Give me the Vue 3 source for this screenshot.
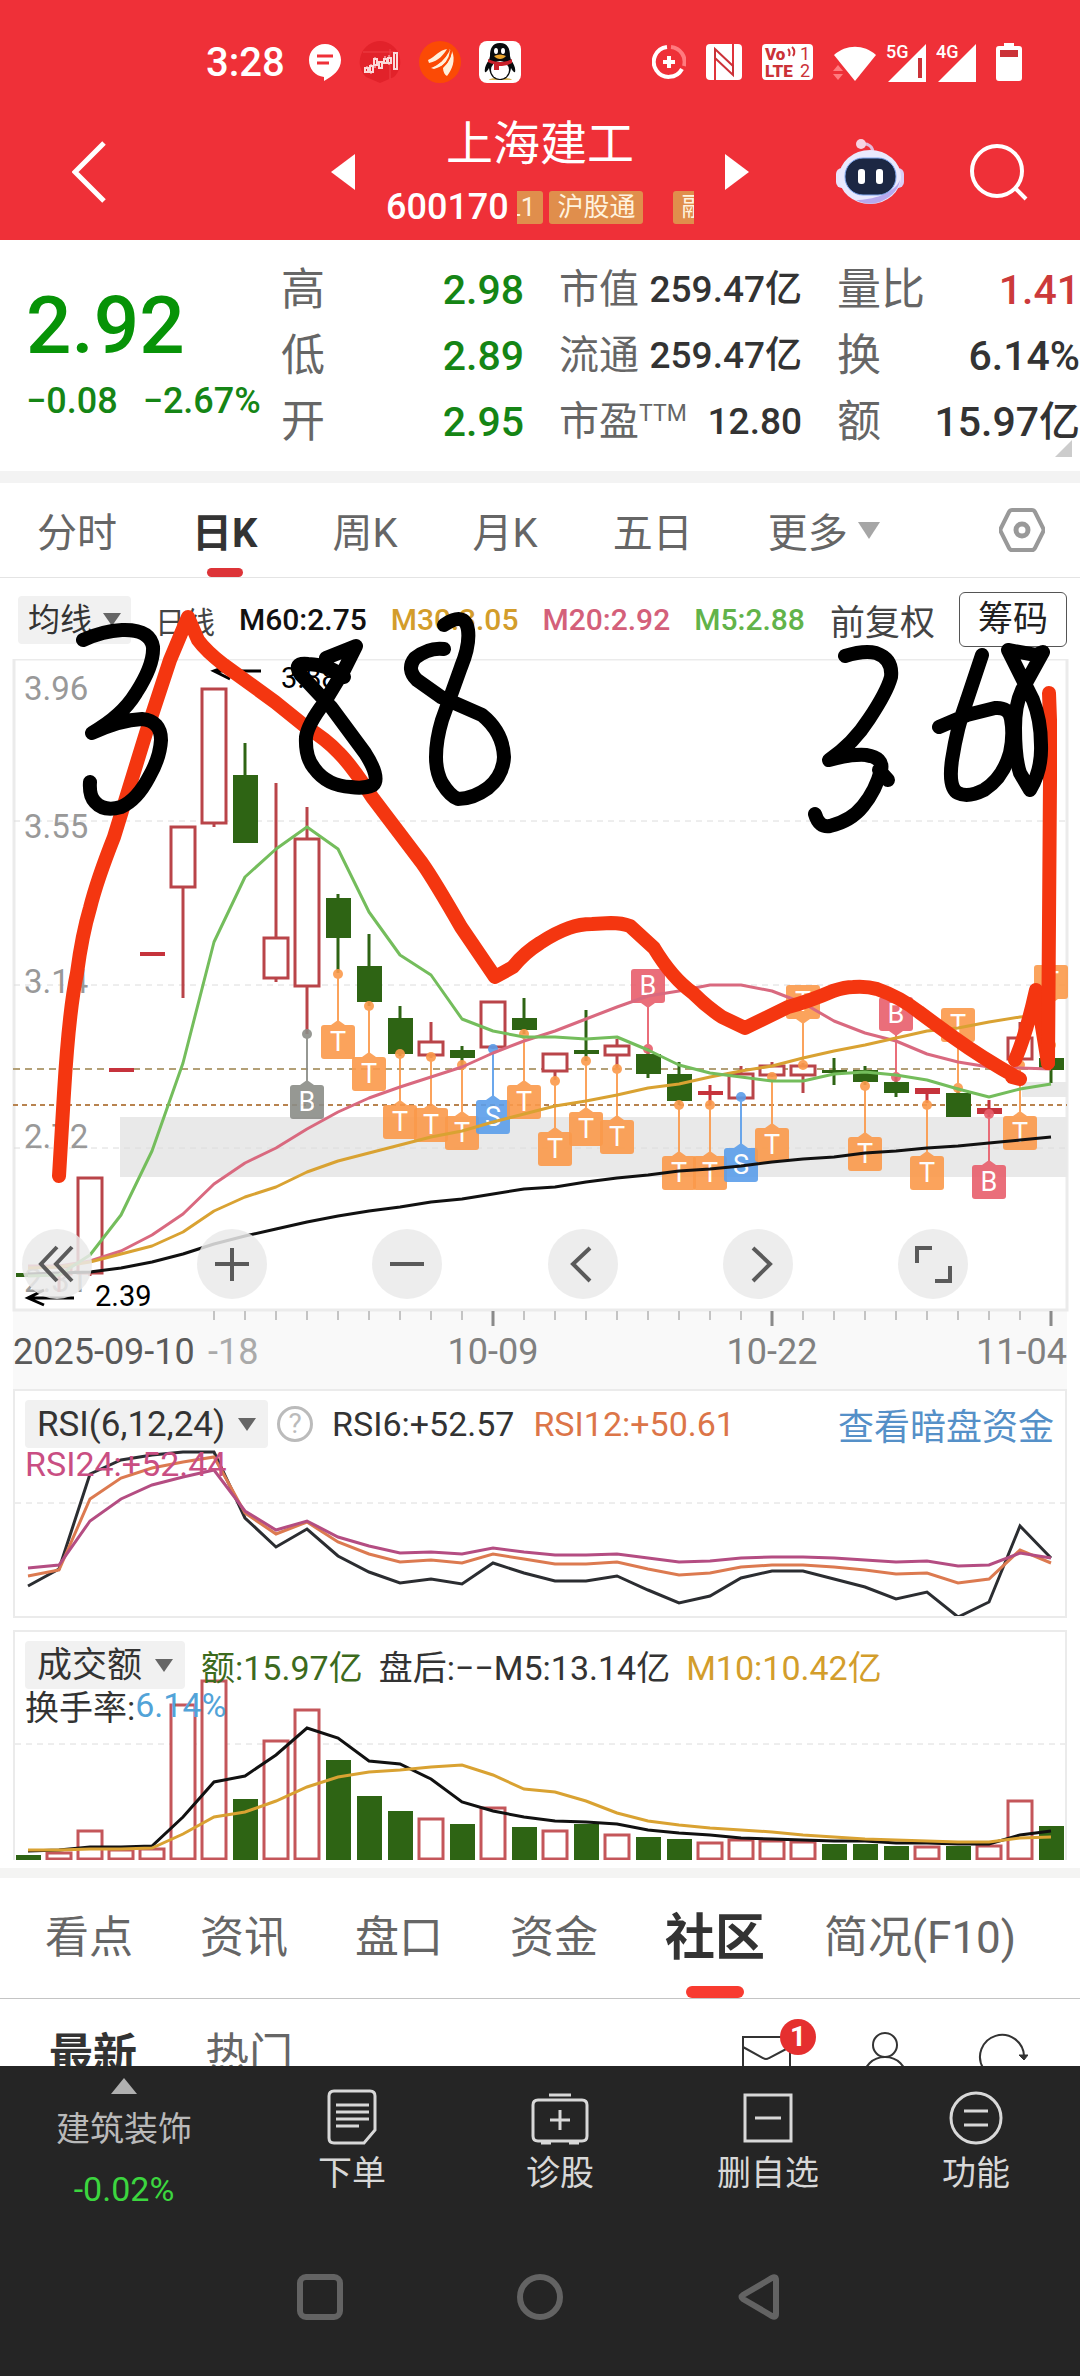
<template>
	<div class="app">
		<header class="header">
			<div class="status-bar">
				<div class="status-left">
					<span class="clock">3:28</span>
					<svg width="32" height="38" viewBox="0 0 32 38">
						<path d="M16 1C7 1 0 8 0 17s6 16 15 17v4c9-5 17-11 17-21C32 8 25 1 16 1z" fill="#fff" />
						<path d="M8 13h16M8 20h12" stroke="#ef3038" stroke-width="3" />
					</svg>
					<svg width="42" height="42" viewBox="0 0 42 42">
						<path d="M21 0a21 21 0 0 1 14 36l-14 6-14-6A21 21 0 0 1 21 0z" fill="#e2222a" />
						<path d="M4 11h32M31 8v30" stroke="#ee4046" />
						<path
							d="M8 25v6M12 23v10M16 16v11M21 20v8M26 15v8M30 14v10"
							stroke="#fbd9d9"
						/>
						<path
							d="M6 27h3v4H6zM11 25h3v6h-3zM15 18h3v6h-3zM20 21h3v6h-3zM25 18h3v4h-3zM29 17h3v5h-3zM35 12h3v16h-3z"
							fill="#e2222a"
							stroke="#fbd9d9"
							stroke-width="2"
						/>
					</svg>
					<svg width="42" height="42" viewBox="0 0 42 42">
						<circle cx="21" cy="21" r="21" fill="#fb4a05" />
						<path
							d="M9 19C16 16 20 9 28 8c-3 5-8 12-18 14zM12 27c8-3 14-9 19-19 2 8-4 17-16 20zM24 27c5-5 8-10 9-17 4 9 0 19-5 25-2-1-4-4-4-8z"
							fill="#fff0dc"
						/>
						<path d="M30 9c-5 9-10 14-20 17M32 10c-1 8-6 15-14 19" fill="none" stroke="#fb4a05" stroke-width="2" />
					</svg>
					<svg width="42" height="42" viewBox="0 0 42 42">
						<rect width="42" height="42" rx="8" fill="#fff" />
						<path d="M10 39c0-3 22-3 23 0z" fill="#d9b65a" />
						<path
							d="M21 2c-8 0-10 6-10 13l-1 4c-3 4-5 9-4 12 1 1 3-2 4-4 1 8 5 12 11 12s10-4 11-12c1 2 3 5 4 4 1-3-1-8-4-12l-1-4C31 8 29 2 21 2z"
							fill="#080b0d"
						/>
						<ellipse cx="21" cy="29" rx="9" ry="9" fill="#fff" />
						<ellipse cx="17" cy="10" rx="2" ry="3" fill="#fff" />
						<ellipse cx="24" cy="10" rx="2" ry="3" fill="#fff" />
						<path d="M15 15c4-2 8-2 12 0-3 4-9 4-12 0z" fill="#eba52d" />
						<path d="M9 18c8 4 16 4 24 0v4c-4 2-8 3-13 3v4h-5v-6c-2 0-4-1-6-2z" fill="#c9202a" />
					</svg>
				</div>
				<div class="status-right">
					<svg width="34" height="34" viewBox="0 0 34 34" fill="none" stroke-width="4">
						<path d="M15 2a15 15 0 1 0 15 22" stroke="#fff" />
						<path d="M19 2a15 15 0 0 1 13 19" stroke="#ff7b7f" />
						<path d="M17 11v12M11 17h12" stroke="#fff" />
					</svg>
					<svg width="36" height="36" viewBox="0 0 36 36">
						<rect width="36" height="36" rx="4" fill="#fff" />
						<path d="M9 36V5M27 31V0" fill="none" stroke="#e0343b" stroke-width="2" />
						<path d="M9 5l18 17v9L9 14z" fill="#fff" stroke="#cb3238" stroke-width="2" />
					</svg>
					<svg width="51" height="36" viewBox="0 0 51 36" class="volte">
						<rect width="51" height="36" rx="4" fill="#fff" />
						<text x="3" y="16" class="volte-bold">Vo</text>
						<text x="3" y="33" class="volte-bold">LTE</text>
						<text x="38" y="16">1</text>
						<text x="38" y="33">2</text>
						<path d="M26 5c2 2 2 4 1 7M30 3c3 3 3 6 1 9" fill="none" stroke="#cb3238" stroke-width="2" />
					</svg>
					<div class="signals">
						<svg width="43" height="36" viewBox="0 0 43 36">
							<path d="M1 9C13-2 31-2 43 9L22 35z" fill="#fff" />
							<path d="M0 25l5-6 5 6zM0 28l5 6 5-6z" fill="#ff7b7f" />
						</svg>
						<svg width="40" height="44" viewBox="0 -6 40 44" class="cell">
							<path d="M40 0v38H2z" fill="#fff" />
							<path d="M32 14h4v20h-4z" fill="#cb3238" />
							<text x="0" y="14">5G</text>
						</svg>
						<svg width="40" height="44" viewBox="0 -6 40 44" class="cell">
							<path d="M40 0v38H2z" fill="#fff" />
							<text x="0" y="14">4G</text>
						</svg>
					</div>
					<svg width="26" height="38" viewBox="0 0 26 38">
						<path
							d="M8 0h10v3h5a3 3 0 0 1 3 3v29a3 3 0 0 1-3 3H3a3 3 0 0 1-3-3V6a3 3 0 0 1 3-3h5z"
							fill="#fff"
						/>
						<path d="M4 7h18v7H4z" fill="#cb3238" />
					</svg>
				</div>
			</div>
			<div class="title-bar">
				<button class="icon-button" aria-label="返回">
					<svg width="34" height="62" viewBox="0 0 34 62">
						<path d="M32 2L3 31l29 29" fill="none" stroke="#fff" stroke-width="5" />
					</svg>
				</button>
				<div class="stock-switch">
					<button class="icon-button" aria-label="上一只">
						<svg width="24" height="36" viewBox="0 0 24 36"><path d="M24 0v36L0 18z" fill="#fff" /></svg>
					</button>
					<div class="stock-title">
						<h1>上海建工</h1>
						<div class="stock-code">
							<span>600170</span>
							<div class="tags">
								<span class="tag">L1</span>
								<span class="tag">沪股通</span>
								<span class="tag tag-last">融</span>
							</div>
						</div>
					</div>
					<button class="icon-button" aria-label="下一只">
						<svg width="24" height="36" viewBox="0 0 24 36"><path d="M0 0v36l24-18z" fill="#fff" /></svg>
					</button>
				</div>
				<div class="title-actions">
					<button class="icon-button" aria-label="智能助手">
						<svg width="68" height="66" viewBox="0 0 68 66">
							<path d="M25 5c8-1 12 3 12 9" fill="none" stroke="#e3b9d9" stroke-width="3" />
							<circle cx="25" cy="5" r="5" fill="#f6d3e2" />
							<rect y="29" width="12" height="20" rx="6" fill="#e9e4fb" />
							<rect x="56" y="29" width="12" height="20" rx="6" fill="#d9cdf5" />
							<ellipse cx="34" cy="38" rx="31" ry="27" fill="#e9e9fd" />
							<path d="M20 61c9 5 19 5 28 0 9-4 15-12 16-20-6 14-28 20-44 20z" fill="#b7a8ee" />
							<rect x="9" y="19" width="51" height="37" rx="18" fill="#1c2743" stroke="#7fa7ef" />
							<rect x="22" y="30" width="7" height="15" rx="3" fill="#fff" />
							<rect x="40" y="30" width="7" height="15" rx="3" fill="#fff" />
						</svg>
					</button>
					<button class="icon-button" aria-label="搜索">
						<svg width="58" height="58" viewBox="0 0 58 58" fill="none" stroke="#fff" stroke-width="4">
							<circle cx="27" cy="28" r="25" />
							<path d="M45 45l11 11" />
						</svg>
					</button>
				</div>
			</div>
		</header>

		<section class="quote">
			<div class="price">
				<strong>2.92</strong>
				<div class="change"><span>−0.08</span><span>−2.67%</span></div>
			</div>
			<div class="facts">
				<dl v-for="(group, index) in facts" :key="index" :class="{ compact: index === 1 }">
					<div v-for="fact in group" :key="fact.label" class="fact">
						<dt>{{ fact.label }}<sup v-if="fact.sup">{{ fact.sup }}</sup></dt>
						<dd :class="fact.tone">{{ fact.value }}</dd>
					</div>
				</dl>
			</div>
			<i class="corner"></i>
		</section>

		<nav class="periods">
			<button v-for="period in periods" :key="period" :class="{ active: period === '日K' }">
				{{ period }}
			</button>
			<button class="more">更多<i class="caret"></i></button>
			<button class="settings" aria-label="设置">
				<svg width="46" height="44" viewBox="0 0 46 44" fill="none" stroke="#999">
					<path d="M13 2h20q2 0 3 2l8 16q1 2 0 4l-8 16q-1 2-3 2H13q-2 0-3-2L2 24q-1-2 0-4l8-16q1-2 3-2z" stroke-width="4" />
					<circle cx="23" cy="22" r="6" stroke-width="5" />
				</svg>
			</button>
		</nav>

		<section class="chart">
			<div class="legend">
				<label class="picker">
					<select aria-label="指标"><option>均线</option></select>
					<i class="caret"></i>
				</label>
				<span class="legend-period">日线</span>
				<span>M60:2.75</span>
				<span class="gold">M30:3.05</span>
				<span class="pink">M20:2.92</span>
				<span class="lime">M5:2.88</span>
				<button class="adjust">前复权</button>
				<button class="chips">筹码</button>
			</div>

			<svg class="plot" viewBox="0 659 1080 730">
				<rect x="13" y="1311" width="1054" height="78" fill="#f9f9f9" />
				<rect x="14" y="659" width="1053" height="651" fill="#fff" stroke="#ebebeb" stroke-width="3" />
				<rect x="120" y="1117" width="947" height="60" fill="#e9e9e9" />
				<rect x="1022" y="1082" width="45" height="15" fill="#e9e9e9" />
				<path d="M14 821H1067M14 985H1067M14 1148H1067" stroke="#dcdcdc" stroke-dasharray="6 5" />
				<path d="M13 1069H1067" stroke="#b3a077" stroke-width="2" stroke-dasharray="7 5" />
				<path d="M13 1105H1067" stroke="#b8834f" stroke-width="2" stroke-dasharray="5 4" />

				<g class="price-labels">
					<text x="24" y="700">3.96</text>
					<text x="24" y="838">3.55</text>
					<text x="24" y="993">3.14</text>
					<text x="24" y="1148">2.72</text>
					<text x="24" y="1292">2.31</text>
				</g>

				<g v-for="(c, i) in candles" :key="'c' + i" :class="c[0]">
					<path :d="`M${x(i)} ${c[1]}V${c[2]}M${x(i)} ${c[3]}V${c[4]}`" stroke-width="3" />
					<rect
						v-if="c[0] === 'up'"
						:x="x(i) - 12"
						:y="c[2] + 1"
						width="24"
						:height="c[3] - c[2] - 1"
						stroke-width="3"
					/>
					<rect v-else :x="x(i) - 12" :y="c[2]" width="25" :height="c[3] - c[2]" stroke="none" />
				</g>

				<g v-for="m in markers" :key="'m' + m[0]" :fill="markerColors[m[1]]" opacity="0.9">
					<circle :cx="x(m[0])" :cy="m[2]" r="5" />
					<path :d="stem(m)" :stroke="markerColors[m[1]]" stroke-width="2" />
					<path :d="pointer(m)" />
					<rect :x="x(m[0]) - 17" :y="boxTop(m)" width="34" height="34" rx="3" />
					<text :x="x(m[0])" :y="boxTop(m) + 26" class="marker-text">{{ m[1][0] }}</text>
				</g>

				<g fill="none" stroke-width="3" stroke-linejoin="round">
					<polyline :points="line(ma20)" stroke="#d9697f" />
					<polyline :points="line(ma30)" stroke="#d9a232" />
					<polyline :points="line(ma60)" stroke="#111" />
					<polyline :points="line(ma5)" stroke="#74bd5c" />
				</g>

				<g fill="none" stroke="#000" stroke-width="3">
					<path d="M261 671H214M230 679l-16-8 16-6" />
					<path d="M74 1298H28M44 1290l-16 8 16 7" />
				</g>
				<text x="281" y="688" class="extreme">3.88</text>
				<text x="95" y="1306" class="extreme">2.39</text>

				<path :d="ticks" stroke="#c4c4c4" stroke-width="2" />
				<path d="M493 1311v15M772 1311v15M1051 1311v15" stroke="#8a8a8a" stroke-width="3" />
				<g class="dates">
					<text x="208" y="1364" fill="#aaa">-18</text>
					<text x="13" y="1364" fill="#5a5a5a">2025-09-10</text>
					<text x="493" y="1364" text-anchor="middle">10-09</text>
					<text x="772" y="1364" text-anchor="middle">10-22</text>
					<text x="1067" y="1364" text-anchor="end">11-04</text>
				</g>
			</svg>

			<div class="controls">
				<button v-for="control in controls" :key="control.label" :aria-label="control.label">
					<svg width="70" height="70" viewBox="0 0 70 70">
						<path :d="control.path" fill="none" stroke="#5a5a5a" stroke-width="4" />
					</svg>
				</button>
			</div>

			<svg class="drawing" viewBox="0 578 1080 811">
				<g stroke="#f43610">
					<path
						d="M59 1176L64 1093Q69 1010 77 973Q82 935 90 908Q97 880 114 837L146 733L170 660L188 617L198 640Q206 651 224 665L275 702L306 727Q326 739 339 753Q352 766 372 797L422 863Q434 880 461 927L495 977L513 967Q524 953 540 943Q555 933 569 928Q580 924 592 924L611 923Q622 923 630 926L654 948Q672 978 693 993Q707 1007 722 1017L745 1028L788 1007Q810 1001 833 991Q845 987 853 987Q867 986 877 989Q900 997 919 1012L953 1037Q985 1060 1020 1079L1012 1077"
					/>
					<path d="M1015 1060Q1026 1035 1036 990L1048 1063" />
					<path d="M1049 693L1050 720V780L1048 1063" />
				</g>
				<g stroke="#000">
					<path
						d="M83 640Q103 631 122 630Q150 629 153 647Q154 665 136 693Q122 716 92 733Q120 720 142 719Q161 721 161 740Q160 758 149 777Q137 800 121 807Q104 812 95 802Q89 796 90 782"
					/>
					<path
						d="M344 677Q330 665 308 664Q292 662 301 675L331 707L365 753Q381 778 373 785Q364 789 351 787Q327 786 314 768Q305 757 306 737Q308 724 324 703L344 670L356 646L326 658"
					/>
					<path
						d="M444 649Q429 647 415 658Q406 669 417 680L441 697L482 715Q503 732 504 757Q503 776 488 788Q473 799 458 799Q450 796 442 783Q436 772 436 757Q436 740 442 720L461 667Q470 645 468 630Q465 611 444 625"
					/>
					<path
						d="M845 656Q864 650 876 653Q893 659 891 677Q887 692 869 719Q853 744 829 760Q850 754 866 755Q884 758 881 770Q876 790 863 806Q851 821 830 826Q819 828 815 814M879 770L888 780"
					/>
					<path
						d="M982 655L967 700Q957 727 952 760Q948 788 958 793Q968 798 984 790Q1003 778 1010 753Q1014 735 1011 719Q1009 707 995 708L967 715L939 727"
					/>
					<path
						d="M1008 650L1036 655L1043 652L1022 690Q1015 705 1015 728Q1015 758 1020 773L1030 790Q1042 770 1041 745Q1041 720 1033 700Z"
					/>
				</g>
			</svg>
		</section>

		<section class="panel">
			<svg class="plot" viewBox="15 1391 1050 225">
				<path d="M15 1503H1065" stroke="#dcdcdc" stroke-dasharray="6 5" />
				<g fill="none" stroke-width="3">
					<polyline :points="line(rsi6)" stroke="#2b2d31" />
					<polyline :points="line(rsi12)" stroke="#dc7a50" />
					<polyline :points="line(rsi24)" stroke="#b44d82" />
				</g>
			</svg>
			<div class="panel-text">
				<div class="panel-row">
					<label class="picker">
						<select aria-label="RSI 参数"><option>RSI(6,12,24)</option></select>
						<i class="caret"></i>
					</label>
					<button class="help" aria-label="说明">?</button>
					<span>RSI6:+52.57</span>
					<span class="orange">RSI12:+50.61</span>
					<a href="#">查看暗盘资金</a>
				</div>
				<div class="panel-row second magenta">RSI24:+52.44</div>
			</div>
		</section>

		<section class="panel">
			<svg class="plot" viewBox="15 1632 1050 228">
				<path d="M15 1744H1065" stroke="#dcdcdc" stroke-dasharray="6 5" />
				<template v-for="(top, i) in volumes" :key="i">
					<rect
						v-if="isUp(i)"
						:x="x(i) - 12"
						:y="top + 1"
						width="24"
						:height="1858 - top"
						fill="#fff"
						stroke="#c4565a"
						stroke-width="3"
					/>
					<rect v-else :x="x(i) - 12" :y="top" width="25" :height="1860 - top" fill="#2e6414" />
				</template>
				<g fill="none" stroke-width="3">
					<polyline :points="line(volume5)" stroke="#111" />
					<polyline :points="line(volume10)" stroke="#d9a232" />
				</g>
			</svg>
			<div class="panel-text">
				<div class="panel-row volume-row">
					<label class="picker">
						<select aria-label="副图指标"><option>成交额</option></select>
						<i class="caret"></i>
					</label>
					<span class="dark-green">额:15.97亿</span>
					<span>盘后:−−M5:13.14亿</span>
					<span class="gold">M10:10.42亿</span>
				</div>
				<div class="panel-row second">换手率:<span class="sky">6.14%</span></div>
			</div>
		</section>

		<nav class="sections">
			<a
				v-for="section in sections"
				:key="section"
				href="#"
				:class="{ active: section === '社区' }"
				>{{ section }}</a
			>
		</nav>

		<div class="feed-bar">
			<button class="active">最新</button>
			<button>热门</button>
			<div class="feed-actions">
				<button class="mail" aria-label="消息">
					<svg width="50" height="50" viewBox="0 0 50 50" fill="none" stroke="#333" stroke-width="2">
						<path d="M1 7h47v36H1zM1 17l20 11q3 2 6 0l21-11" />
					</svg>
					<span class="badge">1</span>
				</button>
				<button aria-label="我的">
					<svg width="50" height="50" viewBox="0 0 50 50" fill="none" stroke="#333" stroke-width="2">
						<circle cx="25" cy="15" r="12" />
						<path d="M3 50c0-14 10-23 22-23s22 9 22 23" />
					</svg>
				</button>
				<button aria-label="刷新">
					<svg width="50" height="50" viewBox="0 0 50 50">
						<path d="M46 26A22 22 0 1 0 40 42" fill="none" stroke="#333" stroke-width="2" />
						<path d="M41 25h9l-4 5z" fill="#333" stroke="#333" />
					</svg>
				</button>
			</div>
		</div>

		<footer class="footer">
			<div class="toolbar">
				<a href="#" class="sector">
					<i class="up-arrow"></i>
					<span>建筑装饰</span>
					<span class="sector-change">-0.02%</span>
				</a>
				<button v-for="tool in tools" :key="tool.label">
					<svg width="58" height="58" viewBox="0 0 58 58" fill="none" stroke="#d8d8d8">
						<path v-for="d in tool.paths" :key="d" :d="d" stroke-width="3" />
					</svg>
					<span>{{ tool.label }}</span>
				</button>
			</div>
			<div class="system-nav">
				<button aria-label="最近任务">
					<svg width="46" height="46" viewBox="0 0 46 46">
						<rect x="3" y="3" width="40" height="40" rx="6" />
					</svg>
				</button>
				<button aria-label="主屏幕">
					<svg width="46" height="46" viewBox="0 0 46 46"><circle cx="23" cy="23" r="20" /></svg>
				</button>
				<button aria-label="后退">
					<svg width="46" height="46" viewBox="0 0 46 46">
						<path d="M39 6v34q0 4-4 2L6 25q-3-2 0-4L35 4q4-2 4 2z" />
					</svg>
				</button>
			</div>
		</footer>
	</div>
</template>

<script setup>
const facts = [
	[
		{ label: "高", value: "2.98", tone: "fall" },
		{ label: "低", value: "2.89", tone: "fall" },
		{ label: "开", value: "2.95", tone: "fall" },
	],
	[
		{ label: "市值", value: "259.47亿" },
		{ label: "流通", value: "259.47亿" },
		{ label: "市盈", sup: "TTM", value: "12.80" },
	],
	[
		{ label: "量比", value: "1.41", tone: "rise" },
		{ label: "换", value: "6.14%" },
		{ label: "额", value: "15.97亿" },
	],
];

const periods = ["分时", "日K", "周K", "月K", "五日"];
const sections = ["看点", "资讯", "盘口", "资金", "社区", "简况(F10)"];

// one column per trading day
const x = (i) => 28 + 31 * i;
const line = (values) => values.map((y, i) => `${x(i)},${y}`).join(" ");

// [kind, high, body top, body bottom, low]
const candles = [
	["down", 1273, 1273, 1277, 1277],
	["up", 1264, 1266, 1274, 1292],
	["up", 1177, 1177, 1273, 1276],
	["solid", 1068, 1068, 1072, 1072],
	["solid", 952, 952, 956, 956],
	["up", 826, 826, 887, 998],
	["up", 688, 688, 823, 827],
	["down", 743, 775, 843, 843],
	["up", 783, 937, 978, 982],
	["up", 807, 838, 986, 1034],
	["down", 894, 898, 938, 973],
	["down", 934, 966, 1002, 1006],
	["down", 1006, 1018, 1054, 1056],
	["up", 1022, 1041, 1055, 1058],
	["down", 1046, 1050, 1058, 1066],
	["up", 1001, 1001, 1047, 1049],
	["down", 998, 1018, 1030, 1034],
	["up", 1053, 1053, 1071, 1080],
	["down", 1010, 1050, 1054, 1061],
	["up", 1039, 1045, 1055, 1068],
	["down", 1048, 1054, 1074, 1078],
	["down", 1062, 1074, 1101, 1105],
	["solid", 1085, 1091, 1095, 1105],
	["up", 1066, 1073, 1098, 1098],
	["up", 1062, 1065, 1075, 1077],
	["up", 1063, 1065, 1075, 1093],
	["down", 1058, 1070, 1073, 1085],
	["down", 1066, 1070, 1082, 1085],
	["down", 1077, 1082, 1093, 1097],
	["solid", 1088, 1088, 1094, 1103],
	["down", 1087, 1093, 1117, 1117],
	["solid", 1100, 1108, 1114, 1117],
	["up", 1022, 1037, 1059, 1063],
	["down", 1058, 1058, 1070, 1083],
];

const markerColors = { T: "#fb9a4b", B: "#e85f6c", S: "#5b9eeb", B0: "#8b8d88" };

// [day, kind, anchor y, flag drawn above the candle]
const markers = [
	[9, "B0", 1034],
	[10, "T", 974],
	[11, "T", 1006],
	[12, "T", 1054],
	[13, "T", 1057],
	[14, "T", 1065],
	[15, "S", 1049],
	[16, "T", 1034],
	[17, "T", 1081],
	[18, "T", 1061],
	[19, "T", 1069],
	[20, "B", 1049, true],
	[21, "T", 1105],
	[22, "T", 1105],
	[23, "S", 1097],
	[24, "T", 1077],
	[25, "T", 1065, true],
	[27, "T", 1086],
	[28, "B", 1077, true],
	[29, "T", 1105],
	[30, "T", 1088, true],
	[31, "B", 1114],
	[32, "T", 1065],
	[33, "T", 1045, true],
];

const boxTop = ([, , y, above]) => (above ? y - 80 : y + 51);
const stem = ([i, , y, above]) => `M${x(i)} ${y}V${above ? y - 46 : y + 51}`;
const pointer = ([i, , y, above]) =>
	above
		? `M${x(i) - 7} ${y - 46}l7 5 7-5z`
		: `M${x(i) - 7} ${y + 51}l7-5 7 5z`;

const ticks = candles.map((c, i) => (i > 5 ? `M${x(i)} 1311v9` : "")).join("");

const ma5 = [
	1276, 1275, 1255, 1215, 1151, 1063, 942, 877, 849, 827, 849, 912, 955, 975, 1019, 1031, 1037,
	1037, 1039, 1037, 1050, 1065, 1073, 1077, 1081, 1081, 1074, 1072, 1075, 1080, 1089, 1097, 1089,
	1084,
];
const ma20 = [
	1266, 1266, 1261, 1251, 1235, 1214, 1184, 1163, 1148, 1129, 1112, 1098, 1087, 1077, 1067, 1053,
	1041, 1031, 1019, 1007, 996, 991, 985, 985, 991, 1003, 1021, 1033, 1041, 1054, 1062, 1067, 1068,
	1069,
];
const ma30 = [
	1268, 1267, 1262, 1254, 1246, 1232, 1211, 1197, 1187, 1172, 1161, 1153, 1145, 1137, 1131, 1122,
	1114, 1106, 1101, 1095, 1088, 1084, 1077, 1071, 1066, 1058, 1051, 1045, 1038, 1031, 1028, 1022,
	1017, 1015,
];
const ma60 = [
	1274, 1273, 1272, 1268, 1262, 1254, 1244, 1236, 1229, 1222, 1216, 1211, 1207, 1202, 1199, 1194,
	1189, 1187, 1182, 1178, 1175, 1171, 1169, 1166, 1162, 1159, 1157, 1153, 1151, 1148, 1146, 1143,
	1140, 1137,
];

const rsi6 = [
	1586, 1569, 1474, 1460, 1455, 1452, 1452, 1518, 1547, 1529, 1556, 1572, 1583, 1579, 1584, 1563,
	1573, 1581, 1581, 1576, 1590, 1603, 1596, 1578, 1571, 1571, 1579, 1587, 1599, 1592, 1617, 1602,
	1526, 1558,
];
const rsi12 = [
	1576, 1570, 1499, 1478, 1468, 1462, 1457, 1513, 1534, 1522, 1542, 1554, 1562, 1560, 1563, 1554,
	1559, 1564, 1564, 1562, 1569, 1575, 1573, 1567, 1565, 1565, 1567, 1570, 1574, 1573, 1583, 1579,
	1550, 1563,
];
const rsi24 = [
	1568, 1565, 1521, 1499, 1485, 1477, 1470, 1511, 1530, 1521, 1537, 1546, 1553, 1552, 1554, 1548,
	1552, 1555, 1555, 1554, 1558, 1562, 1561, 1558, 1557, 1557, 1558, 1560, 1562, 1561, 1566, 1565,
	1553, 1558,
];

const volumes = [
	1855, 1852, 1830, 1849, 1848, 1704, 1680, 1799, 1740, 1709, 1760, 1796, 1811, 1818, 1824, 1807,
	1827, 1830, 1824, 1834, 1837, 1839, 1842, 1839, 1840, 1841, 1844, 1844, 1846, 1846, 1846, 1845,
	1800, 1826,
];
const volume5 = [
	1851, 1850, 1847, 1847, 1846, 1817, 1782, 1776, 1755, 1728, 1738, 1761, 1764, 1779, 1802, 1811,
	1817, 1821, 1822, 1824, 1830, 1833, 1835, 1838, 1839, 1840, 1841, 1841, 1843, 1843, 1844, 1844,
	1835, 1831,
];
const volume10 = [
	1850, 1850, 1849, 1849, 1848, 1834, 1817, 1812, 1801, 1787, 1777, 1772, 1770, 1767, 1765, 1775,
	1789, 1792, 1801, 1813, 1821, 1825, 1828, 1830, 1832, 1835, 1837, 1839, 1840, 1841, 1842, 1842,
	1838, 1837,
];
const isUp = (i) => candles[i][0] !== "down";

const controls = [
	{ label: "最早", path: "M35 18L19 35l16 17M50 18L34 35l16 17" },
	{ label: "放大", path: "M35 19v33M18 35h34" },
	{ label: "缩小", path: "M18 35h34" },
	{ label: "向左", path: "M42 19L25 35l17 17" },
	{ label: "向右", path: "M30 19l17 16-17 17" },
	{ label: "全屏", path: "M19 34V19h15M52 37v15H37" },
];

const tools = [
	{
		label: "下单",
		paths: [
			"M11 3h36q5 0 5 5v34L41 55H11q-5 0-5-5V8q0-5 5-5z",
			"M13 17h33M13 24h33M13 31h33M13 38h23",
		],
	},
	{
		label: "诊股",
		paths: [
			"M7 12h44q5 0 5 5v31q0 5-5 5H7q-5 0-5-5V17q0-5 5-5z",
			"M18 7h22M29 22v20M19 32h20M10 55h10M38 55h10",
		],
	},
	{ label: "删自选", paths: ["M6 7h46v46H6z", "M16 30h26"] },
	{
		label: "功能",
		paths: ["M29 5a25 25 0 1 1 0 50a25 25 0 1 1 0-50z", "M17 23h24M17 37h24"],
	},
];
</script>

<style>
body {
	margin: 0;
	background: #fff;
}
</style>

<style scoped>
.app {
	min-height: 100vh;
	background: #fff;
	color: #333;
	font-family: Roboto, "Noto Sans CJK SC", sans-serif;
	overflow-x: hidden;
}

button,
select {
	margin: 0;
	padding: 0;
	border: none;
	background: none;
	color: inherit;
	font: inherit;
	white-space: nowrap;
}

a {
	color: inherit;
	text-decoration: none;
}

svg {
	display: block;
}

.header {
	background: #ef3038;
	color: #fff;
}

.status-bar {
	display: flex;
	justify-content: space-between;
	align-items: center;
	height: 84px;
	padding: 20px 58px 0 206px;
}

.status-left,
.status-right {
	display: flex;
	align-items: center;
	gap: 18px;
}

.status-right {
	gap: 20px;
}

.signals {
	display: flex;
	align-items: flex-end;
	gap: 10px;
	padding-bottom: 4px;
}

.clock {
	margin-right: 6px;
	font-size: 40px;
	font-weight: 500;
}

.volte text {
	fill: #cb3238;
	font-size: 18px;
}

.volte .volte-bold {
	font-size: 17px;
	font-weight: 900;
}

.cell text {
	fill: #fff;
	stroke: #ef3038;
	stroke-width: 4px;
	paint-order: stroke;
	font-size: 18px;
	font-weight: 500;
}

.title-bar {
	display: grid;
	grid-template-columns: 1fr auto 1fr;
	align-items: center;
	height: 136px;
	padding: 0 52px 0 72px;
}

.icon-button {
	display: block;
	justify-self: start;
}

.stock-switch {
	display: flex;
	align-items: center;
	gap: 31px;
	padding-right: 20px;
}

.stock-title {
	width: 308px;
}

.stock-title h1 {
	margin: 0;
	font-size: 47px;
	line-height: 70px;
	font-weight: 400;
	text-align: center;
}

.stock-code {
	display: flex;
	align-items: center;
	gap: 8px;
	font-size: 36px;
	line-height: 56px;
	font-weight: 500;
}

.tags {
	display: flex;
	flex: 1;
	gap: 6px;
	overflow: hidden;
}

.tag {
	flex: none;
	padding: 0 8px;
	border-radius: 3px;
	background: #e08e4c;
	color: #fff3df;
	font-size: 26px;
	line-height: 33px;
	font-weight: 400;
}

.tag:first-child {
	margin-left: -18px;
}

.tag-last {
	margin-left: 24px;
}

.title-actions {
	display: flex;
	justify-content: flex-end;
	align-items: center;
	gap: 66px;
}

.quote {
	position: relative;
	display: grid;
	grid-template-columns: 255px 1fr;
	padding: 17px 0 16px 26px;
	border-bottom: 12px solid #f3f3f3;
}

.price {
	padding-top: 25px;
	color: #079307;
	white-space: nowrap;
}

.price strong {
	display: block;
	font-size: 80px;
	line-height: 88px;
	font-weight: 500;
}

.change {
	display: flex;
	gap: 25px;
	font-size: 36px;
	line-height: 62px;
	font-weight: 500;
	color: #158515;
}

.facts {
	display: grid;
	grid-template-columns: repeat(3, 1fr);
	gap: 35px;
}

.facts dl {
	margin: 0;
}

.fact {
	display: flex;
	justify-content: space-between;
	font-size: 44px;
	line-height: 66px;
	height: 66px;
	white-space: nowrap;
}

.fact dt {
	color: #666;
}

.fact sup {
	font-size: 23px;
	line-height: 0;
	vertical-align: 14px;
}

.fact dd {
	margin: 0;
	font-size: 41px;
	font-weight: 500;
}

.compact .fact {
	font-size: 40px;
}

.compact dd {
	font-size: 37px;
}

.facts .fall {
	color: #158515;
}

.facts .rise {
	color: #cc3a3a;
}

.corner {
	position: absolute;
	right: 8px;
	bottom: 14px;
	border-left: 17px solid transparent;
	border-bottom: 17px solid #ccc;
}

.periods {
	display: flex;
	align-items: stretch;
	gap: 75px;
	height: 94px;
	padding: 0 35px 0 37px;
	border-bottom: 1px solid #e4e4e4;
	color: #666;
	font-size: 40px;
}

.periods .active {
	position: relative;
	color: #333;
	font-weight: 700;
}

.periods .active::after {
	content: "";
	position: absolute;
	left: 50%;
	bottom: 0;
	width: 36px;
	height: 9px;
	margin-left: -18px;
	border-radius: 5px;
	background: #dd3438;
}

.more {
	display: flex;
	align-items: center;
	gap: 10px;
}

.caret {
	border: 9px solid transparent;
	border-top: 13px solid #666;
	border-bottom: 0;
}

.more .caret {
	border-width: 17px 11px 0;
	border-top-color: #a6a6a6;
}

.settings {
	margin-left: auto;
}

.chart {
	position: relative;
}

.legend {
	display: flex;
	align-items: center;
	gap: 24px;
	height: 81px;
	padding: 2px 13px 0 18px;
	box-sizing: border-box;
	font-size: 30px;
	font-weight: 500;
	color: #111;
	white-space: nowrap;
}

.picker {
	display: flex;
	align-items: center;
	gap: 12px;
	height: 48px;
	padding: 0 12px;
	border-radius: 4px;
	background: #f1f1f1;
	font-weight: 400;
	color: #333;
	box-sizing: border-box;
}

.picker select {
	appearance: none;
}

.legend .picker {
	gap: 10px;
	padding: 0 10px;
	font-size: 32px;
}

.legend-period,
.adjust,
.chips {
	font-weight: 400;
	color: #444;
}

.adjust,
.chips {
	font-size: 35px;
}

.adjust {
	margin-left: auto;
}

.chips {
	height: 55px;
	padding: 0 18px;
	border: 1px solid #555;
	border-radius: 6px;
	line-height: 50px;
	color: #222;
}

.gold {
	color: #d39d2b;
}

.pink {
	color: #d4607a;
}

.lime {
	color: #62b34a;
}

.orange {
	color: #dc7548;
}

.magenta {
	color: #c94e83;
}

.dark-green {
	color: #3c6a1d;
}

.sky {
	color: #52a3d8;
}

.plot {
	width: 100%;
	height: auto;
}

.price-labels text {
	fill: #999;
	font-size: 33px;
}

.up {
	fill: #fff;
	stroke: #b94449;
}

.down {
	fill: #2e6414;
	stroke: #2e6414;
}

.solid {
	fill: #c6333c;
	stroke: #c6333c;
}

.marker-text {
	fill: #fff;
	font-size: 27px;
	text-anchor: middle;
}

.extreme {
	fill: #000;
	font-size: 29px;
}

.dates text {
	font-size: 36px;
}

.dates {
	fill: #808080;
}

.controls {
	position: absolute;
	left: 22px;
	right: 112px;
	bottom: 90px;
	display: flex;
	justify-content: space-between;
}

.controls button {
	border-radius: 50%;
	background: rgba(234, 234, 234, 0.85);
}

.drawing {
	position: absolute;
	inset: 0;
	width: 100%;
	height: 100%;
	pointer-events: none;
	fill: none;
	stroke-width: 14px;
	stroke-linecap: round;
	stroke-linejoin: round;
}

.panel {
	display: grid;
	margin: 0 13px;
	border: 2px solid #ebebeb;
	font-size: 34px;
	white-space: nowrap;
}

.panel + .panel {
	margin-top: 12px;
	border-bottom: 0;
}

.panel .plot,
.panel-text {
	grid-area: 1 / 1;
	min-width: 0;
}

.panel-text {
	padding: 9px 11px 0 10px;
}

.panel-row {
	display: flex;
	align-items: center;
	gap: 19px;
	height: 48px;
}

.panel .picker {
	font-size: 35px;
}

.volume-row {
	gap: 16px;
}

.panel-row.second {
	gap: 0;
	height: 32px;
}

.help {
	width: 36px;
	height: 36px;
	margin-left: -10px;
	border: 3px solid #bbb;
	border-radius: 50%;
	color: #bbb;
	font-size: 28px;
	line-height: 28px;
}

.panel-row a {
	margin-left: auto;
	color: #5590c8;
	font-size: 36px;
}

.sections {
	display: flex;
	align-items: center;
	gap: 67px;
	height: 120px;
	margin-top: 8px;
	padding-left: 45px;
	border-top: 10px solid #f4f4f3;
	border-bottom: 1px solid #c4c4c4;
	color: #666;
	font-size: 44px;
	line-height: 120px;
	white-space: nowrap;
}

.sections .active {
	position: relative;
	color: #333;
	font-size: 50px;
	font-weight: 700;
}

.sections .active + a {
	margin-left: -8px;
}

.sections .active::after {
	content: "";
	position: absolute;
	left: 50%;
	bottom: 0;
	width: 58px;
	height: 12px;
	margin-left: -29px;
	border-radius: 6px;
	background: #f83b30;
}

.feed-bar {
	display: flex;
	align-items: center;
	gap: 68px;
	height: 104px;
	padding: 0 52px 0 49px;
	color: #666;
	font-size: 44px;
}

.feed-bar .active {
	color: #333;
	font-weight: 700;
}

.feed-actions {
	display: flex;
	gap: 68px;
	margin-left: auto;
}

.feed-actions button {
	padding-top: 8px;
}

.mail {
	position: relative;
}

.badge {
	position: absolute;
	top: -3px;
	right: -24px;
	width: 36px;
	height: 36px;
	border-radius: 50%;
	background: #e52f2f;
	color: #fff;
	font-size: 28px;
	line-height: 36px;
	font-weight: 700;
}

.footer {
	position: fixed;
	left: 0;
	right: 0;
	bottom: 0;
	height: 310px;
	background: #252525;
	color: #d8d8d8;
	font-size: 34px;
}

.toolbar {
	display: grid;
	grid-template-columns: 248fr repeat(4, 208fr);
	height: 152px;
}

.toolbar a,
.toolbar button {
	display: flex;
	flex-direction: column;
	align-items: center;
	line-height: 54px;
}

.toolbar button {
	padding-top: 22px;
}

.toolbar .sector {
	padding-top: 12px;
	color: #b9b9b9;
	line-height: 50px;
}

.sector span {
	margin-top: 10px;
}

.up-arrow {
	border: 13px solid transparent;
	border-top: 0;
	border-bottom: 16px solid #b0b0b0;
}

.sector .sector-change {
	color: #3cd63f;
}

.system-nav {
	display: flex;
	justify-content: center;
	gap: 174px;
	padding-top: 56px;
}

.system-nav svg {
	fill: none;
	stroke: #636363;
	stroke-width: 6px;
}
</style>
